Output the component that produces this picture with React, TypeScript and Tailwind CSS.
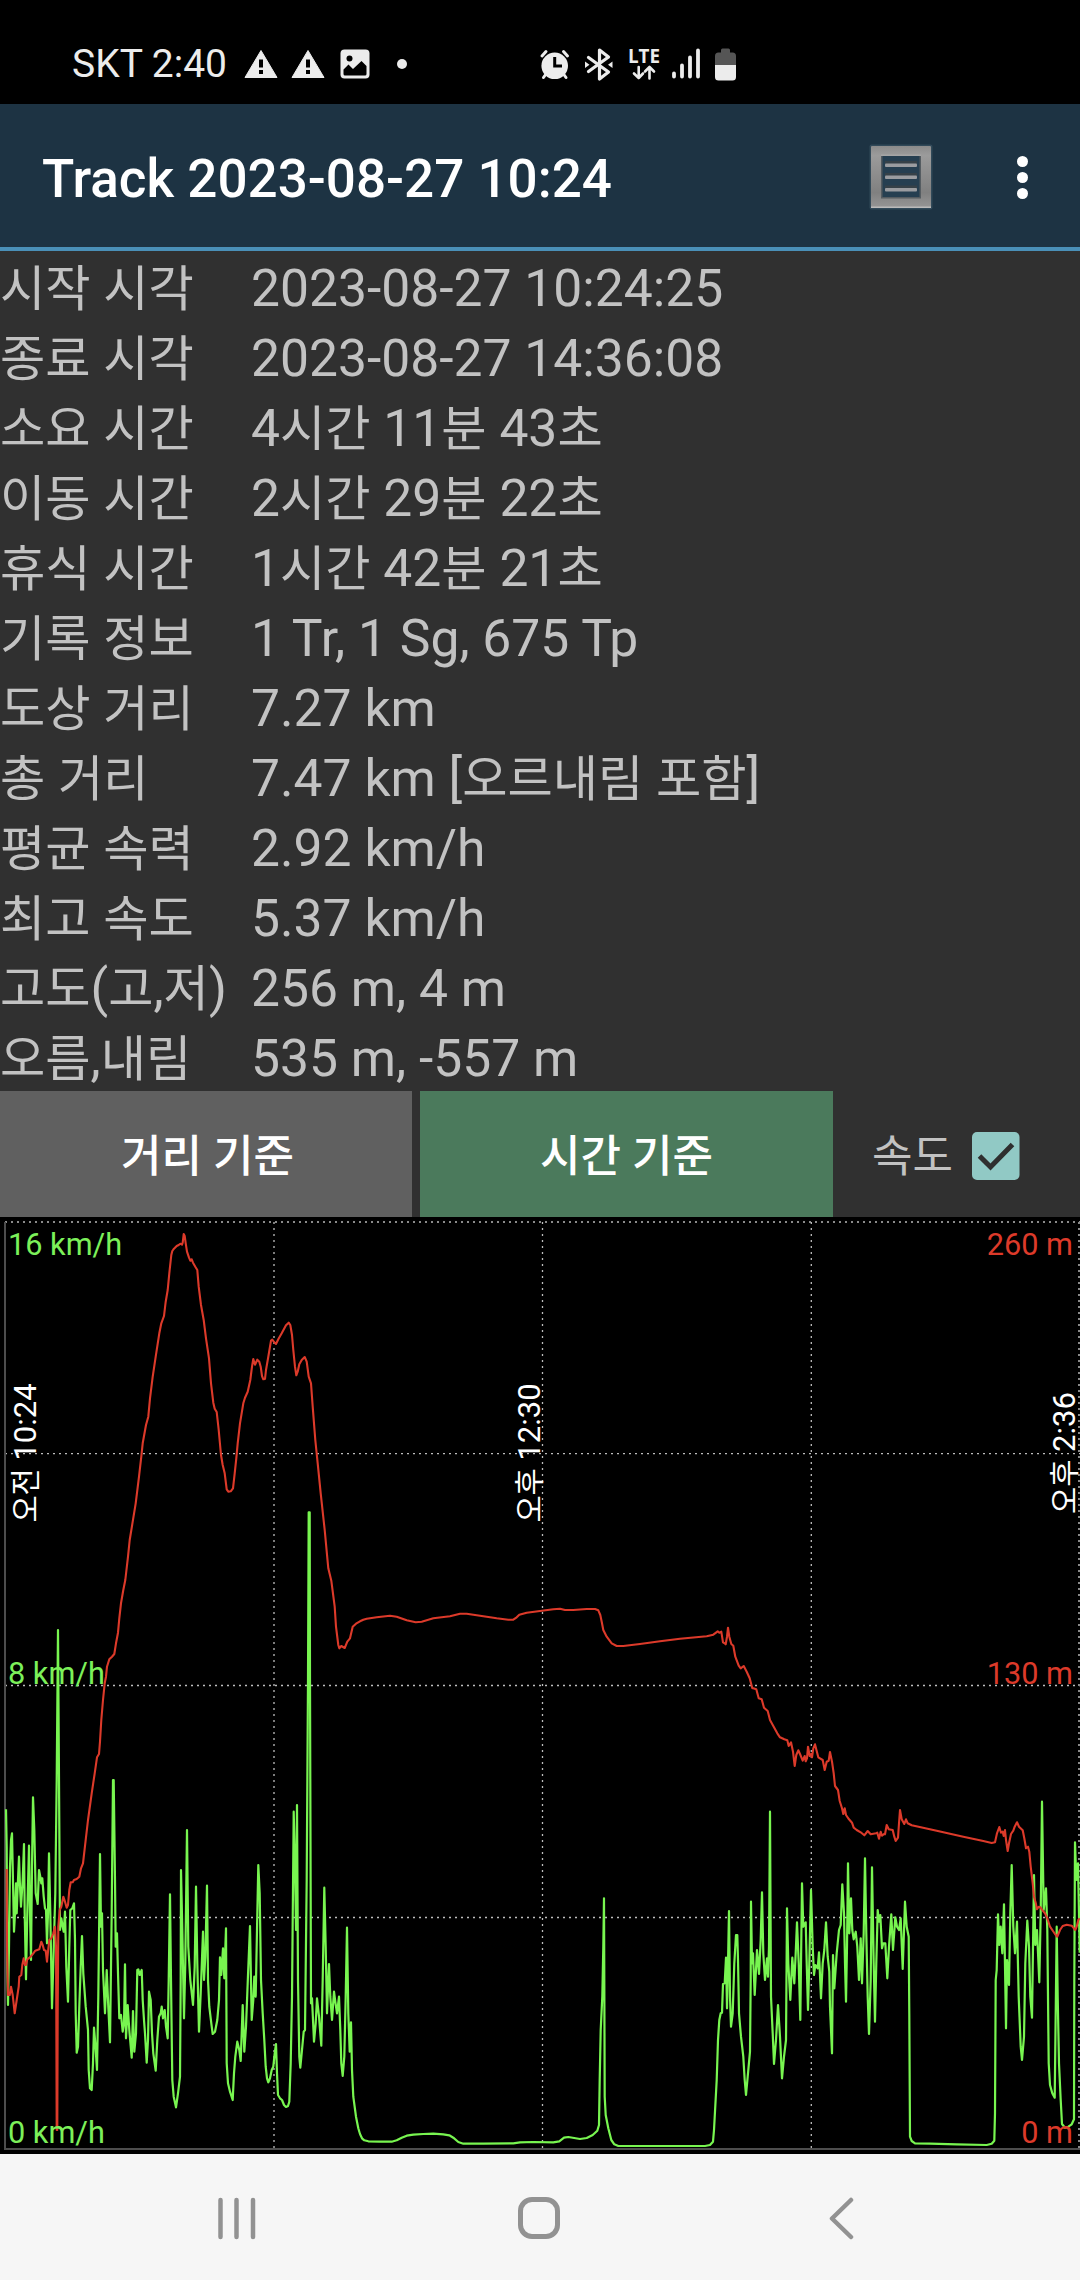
import React from "react";

const FONT = "font-['Roboto','Noto_Sans_CJK_KR',sans-serif]";

interface Stat {
  label: string;
  value: string;
}

const stats: Stat[] = [
  { label: "시작 시각", value: "2023-08-27 10:24:25" },
  { label: "종료 시각", value: "2023-08-27 14:36:08" },
  { label: "소요 시간", value: "4시간 11분 43초" },
  { label: "이동 시간", value: "2시간 29분 22초" },
  { label: "휴식 시간", value: "1시간 42분 21초" },
  { label: "기록 정보", value: "1 Tr, 1 Sg, 675 Tp" },
  { label: "도상 거리", value: "7.27 km" },
  { label: "총 거리", value: "7.47 km [오르내림 포함]" },
  { label: "평균 속력", value: "2.92 km/h" },
  { label: "최고 속도", value: "5.37 km/h" },
  { label: "고도(고,저)", value: "256 m, 4 m" },
  { label: "오름,내림", value: "535 m, -557 m" }
];

// Each run of samples has its own origin; samples are stored in thirds of a pixel.
interface Run {
  x: number;
  y: number;
  samples: string;
}

const speedRuns: Run[] = [
  {
    x: 0,
    y: 463,
    samples:
      "18,388 20,500 22,850 24,975 27,800 30,560 33,480 36,460 38,560 42,755 45,700 48,610 50,700 53,620 57,530 60,620 63,680 68,600 72,492 74,700 78,898 82,700 87,497 90,700 93,840 96,560 99,352 103,450 107,640 113,672 117,570 121,590 124,610 127,595 131,650 135,685 138,690 141,790 144,700 147,520 151,700 156,985 160,850 166,640 170,300 174,-150 177,300 180,750 184,715 188,740 191,755 195,695 199,860 204,965 208,800 211,690 217,685 222,670 225,780 227,1000 230,1118 234,1100 238,980 242,860 246,768 250,880 257,980 264,1050 266,1170 270,1225 275,1230 279,1150 282,1043 286,1090 291,1170 295,950 300,522 303,740 306,700 309,870 315,1000 320,870 325,980 330,1087 335,700 339,300 341,300 345,600 347,800 351,760 354,880 358,1015 363,1005 368,1055 372,1030 375,853 378,1075 383,975 388,1050 395,1133 399,993 403,1115 408,1060 412,870 415,868 419,885 425,870 428,960 432,1020 435,1060 440,1148 444,1080 447,935 452,960 456,1060 460,1120 467,1172 472,1080 477,1010 482,1000 485,980 489,1015 494,990 498,1040 503,1075 506,900 510,643 513,900 517,1200 521,1250 528,1282 534,1240 540,1190 542,900 543,570 547,750 552,1015 556,850 561,450 565,800 571,900 579,975 584,860 588,620 592,850 597,1055 602,940 609,755 612,900 616,830 621,617 624,900 628,980 634,1030 638,1062 645,1055 652,1020 657,960 660,832 664,885 669,805 673,895 678,745 680,1150 684,1210 690,1235 698,1260 702,1180 706,1130 712,1085 718,1110 722,1143 728,975 733,1115 738,1040 744,885 750,738 755,1020 760,960 763,890 767,950 771,750 775,555 779,640 783,900 788,1000 793,1080 797,1160 801,1195 805,1207 810,1195 815,1170 820,1160 824,1120 828,1092 831,1180 834,1245 840,1255 846,1260 852,1275 858,1281 864,1278 868,1265 872,1150 876,950 881,395 885,560 888,750 891,375 894,900 898,1130 901,1163 906,1110 911,1055 915,1050 920,600 924,0 926,-503 929,-503 930,0 933,970 936,955 942,1085 947,1030 951,955 957,1010 964,1097 968,900 973,623 977,800 981,1000 987,852 991,950 996,1020 1002,935 1006,965 1011,1000 1017,950 1021,1050 1024,1150 1028,1188 1033,1130 1037,950 1041,743 1045,1000 1049,1115 1053,1027 1056,1170 1060,1250 1068,1310 1075,1345 1080,1362"
  },
  {
    x: 350,
    y: 463,
    samples:
      "36,1375 43,1381 55,1384 90,1385 125,1385 140,1381 155,1373 170,1367 190,1364 220,1362 250,1361 280,1363 298,1366 310,1373 325,1386 340,1391 400,1391 490,1390 510,1387 550,1386 610,1387 628,1384 642,1373 655,1371 690,1377 710,1374 728,1365 742,1352 747,1335 749,1200 752,1050 757,950 760,800 762,655 763,900 764,1250 767,1305 775,1345 784,1380 793,1393 805,1398 900,1398 1015,1398"
  },
  {
    x: 690,
    y: 463,
    samples:
      "0,1398 45,1398 60,1395 69,1385 72,1350 80,1200 84,1080 88,1020 92,1000 96,998 99,912 104,910 108,833 111,985 114,850 117,693 120,950 123,1040 128,1000 133,850 138,765 142,765 144,840 147,1000 153,1070 160,1130 164,1200 168,1245 173,1190 180,1115 182,900 183,665 186,850 189,820 194,945 201,810 207,882 212,780 216,637 220,820 225,900 231,835 234,890 237,800 240,395 243,950 248,1060 252,1152 258,1080 264,975 270,1070 276,1195 282,1130 288,1080 291,685 295,850 301,960 307,833 313,910 317,820 321,727 326,850 331,1020 336,610 340,740 347,727 350,850 354,990 358,850 363,630 368,800 372,885 376,855 383,865 387,817 393,955 398,850 403,810 408,727 413,830 418,875 420,980 426,1120 429,825 433,925 440,820 447,750 452,735 457,613 462,700 465,850 468,965 471,800 474,550 478,760 483,655 487,750 491,778 497,755 502,800 507,900 512,775 516,910 521,760 525,535 529,760 533,950 537,1062 542,900 546,562 551,850 555,1025 559,850 563,690 567,725 571,705 576,805 580,790 586,790 592,895 597,800 604,703 609,810 616,712 621,740 627,750 632,715 638,867 645,665 650,740 656,770 658,1000 660,1370 665,1383 675,1390 720,1391 800,1393 890,1395 905,1391 913,1382 915,1300 917,900 920,870 924,703 928,795 932,740 937,820 942,673 948,1045 951,840 957,915 961,700 965,555 970,740 975,820 981,725 986,950 992,1100 996,1140 1002,1070 1006,850 1012,722 1017,800 1021,950 1026,1013 1032,585 1036,795 1041,750 1048,907 1052,700 1056,365 1061,690 1068,625 1072,750 1076,1150 1080,1215 1087,1240 1094,1253 1097,1000 1100,740 1103,950 1107,1150 1112,1260 1116,1332 1125,1343 1135,1340 1145,1333 1152,1318 1153,900 1155,487 1159,600 1164,550 1167,700 1169,818"
  }
];

const altitudeRuns: Run[] = [
  {
    x: 0,
    y: 463,
    samples:
      "20,567 21,800 24,945 29,945 33,920 38,945 44,1000 50,960 56,920 58,890 64,885 67,855 71,835 75,855 78,855 82,838 92,830 100,820 106,812 118,808 124,785 128,795 132,810 137,812 141,845 144,815 148,780 154,775 160,760 165,740 168,800 169,1000 170,1350 172,1350 173,1000 175,740 179,690 184,680 190,650 195,665 200,683 204,675 208,630 212,607 218,607 222,600 230,597 238,590 243,565 249,550 256,490 264,420 275,340 284,280 291,232 297,222 300,185 304,120 309,60 314,10"
  },
  {
    x: 0,
    y: -7,
    samples:
      "318,1400 321,1370 328,1348 336,1340 343,1332 348,1300 354,1268 358,1225 363,1180 370,1140 376,1110 384,1040 389,990 398,935 407,880 417,800 424,740 428,700 438,645 445,620 450,565 458,500 467,440 478,370 484,340 492,318 497,275 503,240 508,190 514,135 517,123 522,116 530,108 536,105 541,101 546,104 548,98 551,72 554,78 557,100 561,125 567,143 571,152 575,148 579,158 586,170 592,180 596,230 603,285 611,330 618,385 627,445 633,520 640,578 644,596 650,606 656,660 663,735 668,765 674,790 680,838 685,845 692,844 699,835 704,790 709,745 713,700 720,640 730,580 735,563 743,545 751,510 756,470 760,447 765,464 772,449 778,455 782,470 786,498 790,508 795,507 798,480 805,440 813,392 817,389 822,396 828,402 835,388 845,370 858,346 866,338 871,345 876,375 880,420 885,470 889,496 893,485 898,463 905,450 914,441 920,455 926,500 933,520 938,590 946,690 953,760 962,850 974,960 985,1075 994,1112 1004,1190 1008,1250 1015,1305 1018,1315 1024,1308 1034,1314 1042,1295 1050,1285 1058,1250 1068,1241 1080,1234"
  },
  {
    x: 340,
    y: 153,
    samples:
      "70,749 80,746 110,742 150,737 170,740 200,751 227,757 245,755 280,745 330,739 360,731 380,731 420,737 470,745 505,749 520,749 530,742 538,734 560,728 600,723 640,718 660,716 675,720 700,720 740,717 765,717 775,721 781,735 785,755 790,780 800,800 815,820 830,828 850,828 900,822 960,814 1020,806 1100,799 1120,794 1133,784 1138,788 1144,785 1149,817 1154,820 1157,823 1161,800 1164,773 1168,800 1174,822 1180,827 1186,860 1196,887 1202,895 1211,888 1220,905 1229,925 1237,955"
  },
  {
    x: 690,
    y: 463,
    samples:
      "190,25 199,28 206,55 215,58 222,83 233,93 240,120 250,138 262,160 270,172 283,178 292,181 296,198 303,187 309,215 314,258 319,225 325,211 330,222 338,242 344,228 347,244 351,235 354,200 359,228 363,222 366,232 370,205 375,193 380,213 385,232 398,240 404,270 410,245 416,242 420,216 426,245 431,280 435,318 444,330 449,363 456,385 460,402 464,385 468,405 477,418 486,428 491,443 500,450 512,457 523,466 533,453 542,463 558,460 562,458 567,476 572,455 576,467 582,462 585,463 590,435 596,448 608,450 613,470 617,483 624,473 627,430 630,390 635,418 643,432 648,418 653,430 665,436 740,452 820,470 880,483 905,489 915,487 921,460 928,441 933,458 938,455 941,468 945,450 948,480 953,513 957,490 963,462 970,452 974,440 981,427 987,440 998,451 1003,475 1008,505 1014,500 1018,515 1022,560 1028,610 1032,650 1037,668 1041,688 1046,680 1051,682 1057,690 1065,700 1072,715 1080,740 1095,762 1102,770 1110,750 1118,738 1130,734 1145,737 1156,750 1160,740 1165,720 1169,715"
  }
];

const toPoints = (runs: Run[]) =>
  runs
    .flatMap((run) =>
      run.samples.split(" ").map((sample) => {
        const [x, y] = sample.split(",").map(Number);
        return `${(run.x + x / 3).toFixed(1)},${(run.y + y / 3).toFixed(1)}`;
      })
    )
    .join(" ");

// Hangul is set slightly smaller than the Latin text next to it
const Mixed = ({ text }: { text: string }) => (
  <>
    {text.split(/([가-힣]+)/).map((part, index) =>
      /[가-힣]/.test(part) ? (
        <span key={index} className="text-[49.2px]">{part}</span>
      ) : (
        part
      )
    )}
  </>
);

const WarningIcon = () => (
  <svg className="w-[34px] h-[30px]" viewBox="0 0 34 30">
    <path d="M17 1.5 L33 28.5 H1 Z" fill="#ececec" stroke="#ececec" strokeLinejoin="round" />
    <path d="M15 10.5h4v8h-4zM15 21h4v4h-4z" fill="#000" />
  </svg>
);

const StatusBar = () => (
  <div className="h-[104px] bg-black flex items-center pl-[72px] pt-[23px] text-[#ececec]">
    <span className="text-[39px] leading-[46px] whitespace-nowrap w-[172px]">SKT 2:40</span>
    <div className="flex items-center gap-[13px]">
      <WarningIcon />
      <WarningIcon />
      <svg className="w-[30px] h-[30px] ml-[2px]" viewBox="0 0 30 30">
        <rect x="0.5" y="0.5" width="29" height="29" rx="4" fill="#ececec" />
        <circle cx="9.5" cy="9.5" r="3" fill="#000" />
        <path d="M3.5 20.5 L8.5 15.5 L13 20 L21.5 12 L26.5 17 V25 Q26.5 26.5 25 26.5 H5 Q3.5 26.5 3.5 25 Z" fill="#000" />
      </svg>
    </div>
    <div className="w-[10px] h-[10px] rounded-full bg-[#ececec] ml-[27px]" />
    <svg className="w-[200px] h-[40px] ml-[131px]" viewBox="538 43 200 40">
      {/* alarm */}
      <g fill="none" stroke="#ececec" strokeLinecap="round">
        <circle cx="554.7" cy="64.8" r="13.3" fill="#ececec" stroke="none" />
        <path d="M542 55 L546 50.5 M567.5 55 L563.5 50.5" strokeWidth="3" />
        <path d="M546 73 L543.5 76.5 M563.5 73 L566 76.5" strokeWidth="3" />
        <path d="M554.7 57.5 V65 H560.5" stroke="#000" strokeWidth="3" strokeLinecap="square" />
      </g>
      {/* bluetooth */}
      <path d="M588.5 56.5 L608.5 71 L599.5 78 V49 L608.5 56 L588.5 70.5" fill="none" stroke="#ececec" strokeWidth="3.2" strokeLinejoin="round" strokeLinecap="round" />
      <path d="M585 60.5 L589.5 63.7 L585 67 Z M612.5 60.5 L608 63.7 L612.5 67 Z" fill="#ececec" />
      {/* network */}
      <text x="628" y="61.5" fontSize="19" fontWeight="700" textLength="32" lengthAdjust="spacingAndGlyphs" fill="#ececec" className="font-['Open_Sans',sans-serif]">
        LTE
      </text>
      <g fill="none" stroke="#ececec" strokeWidth="2.6" strokeLinecap="round" strokeLinejoin="round">
        <path d="M638.7 66 V77 M634 72.5 L638.7 77 L643 72.5" />
        <path d="M649.5 77.5 V66.5 M645 70.5 L649.5 66 L654 70.5" />
      </g>
      <path d="M674 72.5 V75.5 M682 64.5 V75.5 M690 56.5 V75.5 M698 49.5 V75.5" stroke="#ececec" strokeWidth="3.8" strokeLinecap="round" />
      {/* battery */}
      <path d="M721 49 Q721 47.5 722.5 47.5 H728.5 Q730 47.5 730 49 V51.5 H732.5 Q736 51.5 736 55 V64 H715 V55 Q715 51.5 718.5 51.5 H721 Z" fill="#555" />
      <path d="M715 64 H736 V76 Q736 79.5 732.5 79.5 H718.5 Q715 79.5 715 76 Z" fill="#ececec" />
    </svg>
  </div>
);

const Toolbar = () => (
  <header className="h-[147px] bg-[#1d3343] border-b-4 border-[#4a90b8] flex items-center pl-[42px] pr-[50px]">
    <h1 className="flex-1 text-[53px] font-medium text-white whitespace-nowrap pt-[9px]">
      Track 2023-08-27 10:24
    </h1>
    <svg className="w-[64px] h-[68px] mr-[81px] mt-[3px]" viewBox="0 0 64 68">
      <defs>
        <linearGradient id="frame" x1="0" y1="0" x2="0" y2="1">
          <stop offset="0" stopColor="#8b8b8b" />
          <stop offset="0.15" stopColor="#9b9b9b" />
          <stop offset="0.75" stopColor="#808080" />
          <stop offset="1" stopColor="#969696" />
        </linearGradient>
      </defs>
      <rect x="0.5" y="1.5" width="63" height="65" rx="2" fill="#3b5262" opacity="0.7" />
      <rect x="2" y="3" width="60" height="62" rx="1" fill="url(#frame)" />
      <rect x="2" y="63.5" width="60" height="1.5" fill="#bababa" />
      <rect x="12" y="12.5" width="40" height="43" fill="#555c61" />
      <rect x="13.5" y="13" width="37" height="41" fill="#263f51" />
      <rect x="12" y="11.5" width="40" height="1.5" fill="#a5a5a5" />
      {[22, 34, 46.5].map((y) => (
        <g key={y}>
          <rect x="16" y={y - 4} width="32" height="3" fill="#364148" />
          <rect x="16" y={y - 1.5} width="32" height="3.5" rx="1" fill="#9a9ca0" />
        </g>
      ))}
    </svg>
    <div className="w-4 flex flex-col items-center gap-[5px] pt-[4px]">
      <i className="w-[11px] h-[11px] rounded-full bg-white" />
      <i className="w-[11px] h-[11px] rounded-full bg-white" />
      <i className="w-[11px] h-[11px] rounded-full bg-white" />
    </div>
  </header>
);

const TrackStats = () => (
  <dl className="text-[51.6px] text-[#c2c2c2]">
    {stats.map((stat) => (
      <div key={stat.label} className="flex h-[70px] leading-[70px] pt-[3px] whitespace-nowrap">
        <dt className="w-[251px]"><Mixed text={stat.label} /></dt>
        <dd><Mixed text={stat.value} /></dd>
      </div>
    ))}
  </dl>
);

const ModeBar = () => (
  <div className="flex h-[126px] text-[44px]">
    <button className="w-[412px] pt-[6px] pl-[3px] bg-[#606060] text-white font-medium">거리 기준</button>
    <button className="w-[413px] ml-2 pt-[6px] bg-[#4b7a5c] text-white font-medium">시간 기준</button>
    <label className="flex flex-1 items-center pl-[39px] text-[#c2c2c2]">
      <span className="w-[100px] pt-[6px]">속도</span>
      <svg className="w-[48px] h-[48px] mt-[4px]" viewBox="0 0 48 48">
        <rect width="47.5" height="48" rx="5" fill="#91c9c5" />
        <path d="M7.5 24 L18.5 35 L40.5 12.5" fill="none" stroke="#2f2f2f" strokeWidth="5" />
      </svg>
    </label>
  </div>
);

const TimeLabel = ({ x, half, time }: { x: number; half: string; time: string }) => (
  <text transform={`translate(${x} 236) rotate(-90)`} textAnchor="middle" fontSize="31" fill="#fff">
    <tspan fontSize="29.5">{half}</tspan> {time}
  </text>
);

const TrackChart = () => (
  <svg className="block w-[1080px] h-[937px] bg-black" viewBox="0 0 1080 937">
    <g stroke="#bdbdbd" strokeWidth="1.3" strokeDasharray="2 4">
      <path d="M5 5 H1080" stroke="#8a8a8a" strokeWidth="2" />
      <path d="M5 236.7 H1080 M5 468.5 H1080 M5 700.5 H1080" />
      <path d="M274 5 V931 M542.5 5 V931 M811.3 5 V931" />
      <path d="M1079 5 V931" stroke="#8a8a8a" strokeWidth="2" />
    </g>
    <path d="M5 5 V932 H1080" fill="none" stroke="#4d4d4d" strokeWidth="2" />

    <polyline points={toPoints(speedRuns)} fill="none" stroke="#78f550" strokeWidth="2.2" strokeLinejoin="round" />
    <polyline points={toPoints(altitudeRuns)} fill="none" stroke="#dc3a2a" strokeWidth="2.1" strokeLinejoin="round" />

    <g fontSize="30.7" fill="#7cf05a">
      <text x="8" y="38">16 km/h</text>
      <text x="8" y="467">8 km/h</text>
      <text x="8" y="926">0 km/h</text>
    </g>
    <g fontSize="30.7" fill="#dc3a2a" textAnchor="end">
      <text x="1073" y="38">260 m</text>
      <text x="1073" y="467">130 m</text>
      <text x="1073" y="926">0 m</text>
    </g>
    <TimeLabel x={36} half="오전" time="10:24" />
    <TimeLabel x={540} half="오후" time="12:30" />
    <TimeLabel x={1075} half="오후" time="2:36" />
  </svg>
);

const NavBar = () => (
  <nav className="h-[126px] bg-[#f6f6f6] flex items-center pl-[215px] pt-[2px]">
    <svg className="w-[44px] h-[44px]" viewBox="0 0 44 44">
      <path d="M5.5 4 V41 M21.5 4 V41 M38 4 V41" stroke="#929292" strokeWidth="4.5" strokeLinecap="round" />
    </svg>
    <svg className="w-[44px] h-[44px] ml-[258px]" viewBox="0 0 44 44">
      <rect x="3.5" y="3.5" width="37" height="37" rx="11.5" fill="none" stroke="#929292" strokeWidth="5" />
    </svg>
    <svg className="w-[28px] h-[44px] ml-[266px]" viewBox="0 0 28 44">
      <path d="M24 4 L5 22.5 L24 41" fill="none" stroke="#929292" strokeWidth="4.5" strokeLinecap="round" strokeLinejoin="round" />
    </svg>
  </nav>
);

export default function App() {
  return (
    <main className={`w-[1080px] h-[2280px] overflow-hidden bg-[#303030] ${FONT}`}>
      <StatusBar />
      <Toolbar />
      <TrackStats />
      <ModeBar />
      <TrackChart />
      <NavBar />
    </main>
  );
}
